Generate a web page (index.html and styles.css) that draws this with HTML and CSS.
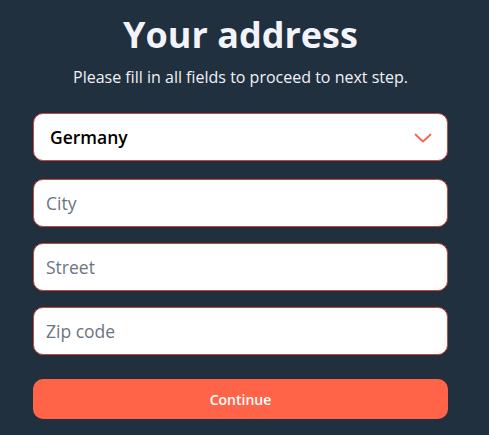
FILE: index.html
```html
<!DOCTYPE html>
<html lang="en">
<head>
    <meta charset="UTF-8">
    <meta name="viewport" content="width=device-width, initial-scale=1.0">
    <title>Your address</title>
    <link rel="stylesheet" href="styles.css">
</head>
<body>
    <main class="address">
        <h1 class="title">Your address</h1>
        <p class="subtitle">Please fill in all fields to proceed to next step.</p>

        <form class="address-form">
            <div class="select-wrap">
                <select class="field field-select" name="country">
                    <option value="DE">Germany</option>
                    <option value="AT">Austria</option>
                    <option value="CH">Switzerland</option>
                </select>
                <svg class="chevron" width="18" height="10" viewBox="0 0 18 10">
                    <path d="M1.5 1.5 L9 8.5 L16.5 1.5" fill="none" stroke="#f0674f" stroke-width="1.8" stroke-linecap="round" stroke-linejoin="round"/>
                </svg>
            </div>
            <input class="field" type="text" name="city" placeholder="City">
            <input class="field" type="text" name="street" placeholder="Street">
            <input class="field" type="text" name="zip" placeholder="Zip code">

            <button class="btn" type="submit">Continue</button>
        </form>
    </main>
</body>
</html>
```

FILE: styles.css
```css
body {
    margin: 0;
    padding: 0 8px 0 0;
    background-color: #21303f;
    font-family: "Open Sans", Lato, sans-serif;
}
.address {
    width: 415px;
    margin: 0 auto;
    padding-top: 8px;
}
.title {
    margin: 0;
    text-align: center;
    color: #f3f3fb;
    font-size: 36px;
    font-weight: 700;
    line-height: 54px;
}
.subtitle {
    margin: 5px 0 0;
    text-align: center;
    color: #f1f1f6;
    font-size: 16px;
    line-height: 20px;
}
.address-form {
    display: flex;
    flex-direction: column;
    margin-top: 26px;
}
.select-wrap {
    position: relative;
    margin-bottom: 18px;
}
.field {
    box-sizing: border-box;
    width: 100%;
    height: 48px;
    margin: 0 0 16px;
    padding: 0 12px;
    border: 1px solid #c4493b;
    border-radius: 10px;
    background: #fff;
    font-family: inherit;
    font-size: 17.5px;
    color: #111;
    outline: none;
}
.field::placeholder {
    color: #6b7482;
}
.field-select {
    margin: 0;
    padding-left: 16px;
    font-size: 17.5px;
    font-weight: 600;
    color: #000;
    appearance: none;
    -webkit-appearance: none;
}
.chevron {
    position: absolute;
    right: 16px;
    top: 20px;
    pointer-events: none;
}
.btn {
    height: 40px;
    margin-top: 8px;
    border: none;
    border-radius: 10px;
    background-color: #ff6449;
    color: #fff;
    font-family: inherit;
    font-size: 14px;
    font-weight: 600;
    cursor: pointer;
}
```
